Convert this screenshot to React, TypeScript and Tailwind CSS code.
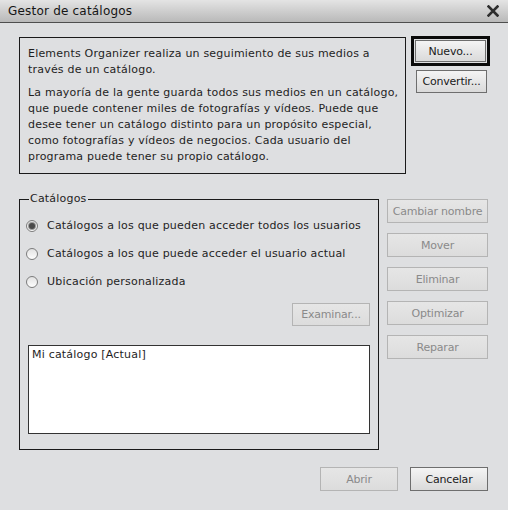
import React from "react";

const font = { fontFamily: '"DejaVu Sans", Verdana, sans-serif' };

function Btn({ children, disabled, className = "" }: { children: React.ReactNode; disabled?: boolean; className?: string }) {
  return (
    <div
      className={
        "flex items-center justify-center text-[11px] leading-none tracking-[-0.2px] border " +
        (disabled
          ? "border-[#b4b4b4] text-[#8a8a8a] bg-gradient-to-b from-[#e6e6e6] to-[#dcdcdc] "
          : "border-[#6e6e6e] text-[#1a1a1a] bg-gradient-to-b from-[#f4f4f4] to-[#dadada] ") +
        className
      }
    >
      {children}
    </div>
  );
}

function Radio({ checked, label }: { checked?: boolean; label: string }) {
  return (
    <div className="flex items-center h-[16px]">
      <div className="w-[12px] h-[12px] rounded-full border border-[#7c7c7c] bg-gradient-to-b from-[#e2e2e2] to-[#fdfdfd] flex items-center justify-center">
        {checked && <div className="w-[6px] h-[6px] rounded-full bg-[#4a4a4a] ring-1 ring-[#9a9a9a]" />}
      </div>
      <span className="ml-[9px] text-[11px] text-[#1e1e1e]">{label}</span>
    </div>
  );
}

export default function App() {
  return (
    <div className="w-[508px] h-[510px] bg-[#dedfe1] flex flex-col overflow-hidden tracking-[0.2px]" style={font}>
      <div className="h-[23px] shrink-0 flex items-center justify-between pl-[8px] pr-[9px] bg-gradient-to-b from-[#e4e4e4] to-[#b9b9b9] border-b border-[#4e4e4e]">
        <span className="text-[12px] text-[#151515]">Gestor de catálogos</span>
        <svg width="12" height="12" viewBox="0 0 12 12">
          <path d="M1.5 1.5 L10.5 10.5 M10.5 1.5 L1.5 10.5" stroke="#2e2e2e" strokeWidth="2.6" strokeLinecap="square" />
        </svg>
      </div>

      <div className="flex pl-[19px] mt-[14px]">
        <div className="w-[387px] h-[137px] border border-[#1a1a1a] pt-[8px] pl-[8px] pr-[4px] text-[11px] leading-[16px] text-[#1e1e1e] whitespace-nowrap">
          <p>
            Elements Organizer realiza un seguimiento de sus medios a
            <br />
            través de un catálogo.
          </p>
          <p className="mt-[7px]">
            La mayoría de la gente guarda todos sus medios en un catálogo,
            <br />
            que puede contener miles de fotografías y vídeos. Puede que
            <br />
            desee tener un catálogo distinto para un propósito especial,
            <br />
            como fotografías y vídeos de negocios. Cada usuario del
            <br />
            programa puede tener su propio catálogo.
          </p>
        </div>
        <div className="ml-[5px] flex flex-col">
          <div className="w-[79px] h-[30px] border-[3px] border-[#0a0a0a] flex items-center justify-center -mt-px">
            <Btn className="w-[71px] h-[22px]">Nuevo...</Btn>
          </div>
          <Btn className="w-[71px] h-[23px] ml-[5px] mt-[4px]">Convertir...</Btn>
        </div>
      </div>

      <div className="flex pl-[19px] mt-[25px]">
        <fieldset className="w-[357px] h-[258px] border border-[#1a1a1a] pl-[6px] pr-[8px] pt-0 pb-0 -mt-[7px]">
          <legend className="text-[11px] text-[#1e1e1e] px-[1px] ml-[3px] leading-[14px]">Catálogos</legend>
          <div className="flex flex-col gap-[12px] mt-[12px]">
            <Radio checked label="Catálogos a los que pueden acceder todos los usuarios" />
            <Radio label="Catálogos a los que puede acceder el usuario actual" />
            <Radio label="Ubicación personalizada" />
          </div>
          <div className="flex justify-end mt-[13px] pr-[0px]">
            <Btn disabled className="w-[78px] h-[23px]">Examinar...</Btn>
          </div>
          <div className="mt-[19px] ml-[2px] w-[342px] h-[89px] bg-white border border-[#333] px-[3px] pt-[1px] text-[11px] text-[#1e1e1e]">
            Mi catálogo [Actual]
          </div>
        </fieldset>
        <div className="ml-[8px] flex flex-col gap-[10px]">
          <Btn disabled className="w-[101px] h-[24px]">Cambiar nombre</Btn>
          <Btn disabled className="w-[101px] h-[24px]">Mover</Btn>
          <Btn disabled className="w-[101px] h-[24px]">Eliminar</Btn>
          <Btn disabled className="w-[101px] h-[24px]">Optimizar</Btn>
          <Btn disabled className="w-[101px] h-[24px]">Reparar</Btn>
        </div>
      </div>

      <div className="flex justify-end pr-[20px] mt-[17px] gap-[12px]">
        <Btn disabled className="w-[78px] h-[24px]">Abrir</Btn>
        <Btn className="w-[78px] h-[24px]">Cancelar</Btn>
      </div>
    </div>
  );
}
